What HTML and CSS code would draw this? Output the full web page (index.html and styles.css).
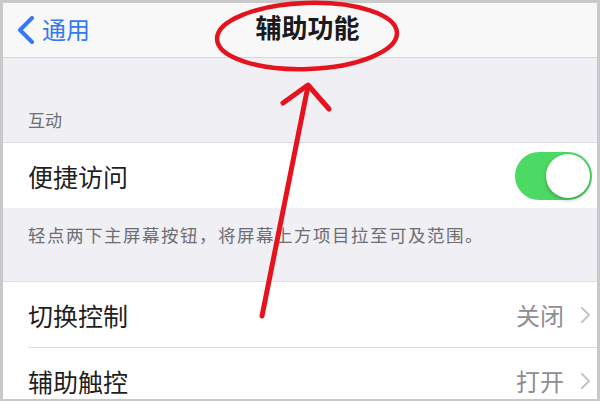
FILE: index.html
```html
<!DOCTYPE html>
<html lang="zh-CN">
<head>
<meta charset="utf-8">
<title>辅助功能</title>
<link rel="stylesheet" href="styles.css">
</head>
<body>
<div class="frame">
  <div class="screen">
    <header class="nav">
      <div class="back">
        <svg class="back-chev" width="20" height="28" viewBox="0 0 20 28"><path d="M16 2 L4 14 L16 26" fill="none" stroke="#3478f6" stroke-width="4" stroke-linecap="round" stroke-linejoin="round"/></svg>
        <span class="back-text">通用</span>
      </div>
      <div class="title">辅助功能</div>
    </header>
    <div class="group-head">互动</div>
    <div class="row row-top">
      <span class="label">便捷访问</span>
      <span class="toggle"><span class="knob"></span></span>
    </div>
    <div class="group-foot">轻点两下主屏幕按钮，将屏幕上方项目拉至可及范围。</div>
    <div class="list">
      <div class="row row-top">
        <span class="label">切换控制</span>
        <span class="value">关闭<svg class="chev" width="12" height="18" viewBox="0 0 12 18"><path d="M2 2 L9 9 L2 16" fill="none" stroke="#c4c4c8" stroke-width="2" stroke-linecap="round" stroke-linejoin="round"/></svg></span>
      </div>
      <div class="sep"></div>
      <div class="row">
        <span class="label">辅助触控</span>
        <span class="value">打开<svg class="chev" width="12" height="18" viewBox="0 0 12 18"><path d="M2 2 L9 9 L2 16" fill="none" stroke="#c4c4c8" stroke-width="2" stroke-linecap="round" stroke-linejoin="round"/></svg></span>
      </div>
    </div>
  </div>
</div>
<svg class="annot" width="600" height="401" viewBox="0 0 600 401">
  <ellipse cx="307" cy="36" rx="90" ry="33" transform="rotate(-2 307 36)" fill="none" stroke="#e5131d" stroke-width="4.5"/>
  <path d="M262 316 L308 86" fill="none" stroke="#e5131d" stroke-width="5" stroke-linecap="round"/>
  <path d="M283 103 L308 85 L329 109" fill="none" stroke="#e5131d" stroke-width="5" stroke-linecap="round" stroke-linejoin="round"/>
</svg>
</body>
</html>
```
FILE: styles.css
```css
html, body {
  margin: 0;
  padding: 0;
}
body {
  width: 600px;
  height: 401px;
  overflow: hidden;
  position: relative;
  background: #c9c9c9;
  font-family: "Noto Sans CJK SC", "Noto Sans", sans-serif;
}
.frame {
  padding: 3px 3px 2px 3px;
  height: 401px;
  box-sizing: border-box;
}
.screen {
  background: #efeff4;
  height: 100%;
  overflow: hidden;
}
.nav {
  height: 54px;
  background: #f8f8f9;
  border-bottom: 1px solid #d6d6da;
  position: relative;
  display: flex;
  align-items: center;
}
.back {
  display: flex;
  align-items: center;
  margin-left: 13px;
  gap: 6px;
  color: #3478f6;
}
.back-chev {
  display: block;
}
.back-text {
  font-size: 24px;
  line-height: 28px;
  margin-top: -2px;
}
.title {
  position: absolute;
  left: 0;
  right: 0;
  top: 9px;
  text-align: center;
  font-size: 26px;
  line-height: 30px;
  font-weight: bold;
  color: #1a1a1a;
  padding-left: 15px;
}
.group-head {
  height: 84px;
  box-sizing: border-box;
  padding: 50px 0 0 25px;
  font-size: 17px;
  line-height: 24px;
  color: #6d6d72;
}
.row {
  height: 65px;
  background: #fff;
  display: flex;
  align-items: center;
  justify-content: space-between;
  padding: 0 5px 0 25px;
}
.row-top {
  border-top: 1px solid #dedee2;
}
.label {
  font-size: 25px;
  line-height: 30px;
  color: #1f1f1f;
}
.toggle {
  width: 77px;
  height: 48px;
  border-radius: 24px;
  background: #4cd964;
  box-sizing: border-box;
  padding: 2px;
  display: flex;
  justify-content: flex-end;
  margin-right: 0;
}
.knob {
  width: 44px;
  height: 44px;
  border-radius: 50%;
  background: #fff;
  box-shadow: 0 2px 4px rgba(0, 0, 0, 0.25);
}
.group-foot {
  height: 73px;
  box-sizing: border-box;
  padding: 14px 0 0 25px;
  font-size: 17.5px;
  line-height: 26px;
  letter-spacing: 1.5px;
  color: #6d6d72;
}
.list {
  background: #fff;
}
.sep {
  height: 1px;
  background: #dcdce0;
  margin-left: 25px;
}
.value {
  display: flex;
  align-items: center;
  gap: 16px;
  font-size: 24px;
  line-height: 30px;
  color: #8e8e93;
}
.chev {
  display: block;
}
.annot {
  position: absolute;
  left: 0;
  top: 0;
  pointer-events: none;
}
```
